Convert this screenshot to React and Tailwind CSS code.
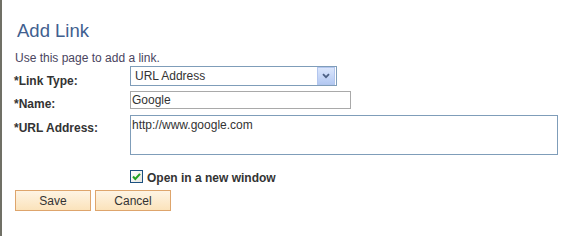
import React from "react";

export default function App() {
  return (
    <div className="w-[564px] h-[236px] bg-white border-l-2 border-[#707066] pl-[12px] pt-[21px] font-['Liberation_Sans',Arial,sans-serif] text-[12px] leading-[14px] text-[#333]">
      <h1 className="ml-[3px] h-[20px] text-[18.5px] leading-[20px] text-[#41608f] font-normal">Add Link</h1>
      <p className="mt-[10px] ml-[1px] h-[14px] text-[#4a4560]">Use this page to add a link.</p>

      <div className="mt-[1px] h-[20px] flex items-start">
        <div className="w-[116px] pt-[8px] font-bold text-[#333]">*Link Type:</div>
        <div className="relative w-[207px] h-[20px] border border-[#7f9db9] bg-white flex items-center pl-[4px] text-[#333]">
          <span>URL Address</span>
          <div className="absolute right-[1px] top-[0px] w-[18px] h-[18px] border border-[#b3c6ee] bg-gradient-to-b from-[#dbe6fc] to-[#b4c9f2] flex items-center justify-center">
            <svg width="8" height="6" viewBox="0 0 8 6">
              <path d="M1 1.2 L4 4.2 L7 1.2" fill="none" stroke="#4d6185" strokeWidth="1.8" />
            </svg>
          </div>
        </div>
      </div>

      <div className="mt-[5px] h-[18px] flex items-start">
        <div className="w-[116px] pt-[6px] font-bold text-[#333]">*Name:</div>
        <input
          readOnly
          value="Google"
          className="w-[221px] h-[18px] border border-[#a9a9a9] bg-white pl-[1px] text-[12px] leading-[14px] text-[#333] outline-none"
        />
      </div>

      <div className="mt-[6px] h-[40px] flex items-start">
        <div className="w-[116px] pt-[6px] font-bold text-[#333]">*URL Address:</div>
        <textarea
          readOnly
          value="http://www.google.com"
          className="w-[428px] h-[40px] border border-[#7f9db9] bg-white pl-[1px] pt-[2px] text-[12px] leading-[14px] text-[#333] resize-none outline-none overflow-hidden"
        />
      </div>

      <div className="mt-[15px] ml-[116px] h-[15px] flex items-start gap-[4px]">
        <div className="w-[13px] h-[13px] border border-[#1c5180] bg-gradient-to-br from-[#ffffff] to-[#e6e6e0] flex items-center justify-center">
          <svg width="11" height="11" viewBox="0 0 11 11">
            <path d="M2 5.5 L4.3 8 L9 2.8" fill="none" stroke="#21a121" strokeWidth="2" />
          </svg>
        </div>
        <span className="pt-[1px] font-bold text-[#333]">Open in a new window</span>
      </div>

      <div className="mt-[5px] ml-[1px] flex gap-[4px]">
        <button className="w-[76px] h-[21px] border border-[#dea56c] bg-gradient-to-b from-[#fef4e4] to-[#fbe3bb] text-[12px] leading-[14px] text-[#333]">
          Save
        </button>
        <button className="w-[76px] h-[21px] border border-[#dea56c] bg-gradient-to-b from-[#fef4e4] to-[#fbe3bb] text-[12px] leading-[14px] text-[#333]">
          Cancel
        </button>
      </div>
    </div>
  );
}
